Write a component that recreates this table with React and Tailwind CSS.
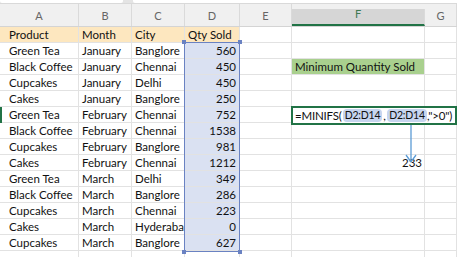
import React from 'react';

const cols = [
  { key: 'A', w: 'w-[79px]' },
  { key: 'B', w: 'w-[53px]' },
  { key: 'C', w: 'w-[53px]' },
  { key: 'D', w: 'w-[55px]' },
  { key: 'E', w: 'w-[52px]' },
  { key: 'F', w: 'w-[133px]' },
  { key: 'G', w: 'flex-1' },
];

const rows = [
  ['Green Tea', 'January', 'Banglore', 560],
  ['Black Coffee', 'January', 'Chennai', 450],
  ['Cupcakes', 'January', 'Delhi', 450],
  ['Cakes', 'January', 'Banglore', 250],
  ['Green Tea', 'February', 'Chennai', 752],
  ['Black Coffee', 'February', 'Chennai', 1538],
  ['Cupcakes', 'February', 'Banglore', 981],
  ['Cakes', 'February', 'Chennai', 1212],
  ['Green Tea', 'March', 'Delhi', 349],
  ['Black Coffee', 'March', 'Banglore', 286],
  ['Cupcakes', 'March', 'Chennai', 223],
  ['Cakes', 'March', 'Hyderabad', 0],
  ['Cupcakes', 'March', 'Banglore', 627],
];

const cell = 'h-4 shrink-0 border-r border-b border-[#e2e2e2] overflow-hidden whitespace-nowrap leading-[15px]';

function Row({ children }) {
  return <div className="flex">{children}</div>;
}

export default function App() {
  return (
    <div
      className="relative w-[457px] h-[257px] overflow-hidden bg-white text-[11.5px] text-[#111]"
      style={{ fontFamily: 'Lato, "Liberation Sans", sans-serif' }}
    >
      {/* formula bar bottom edge */}
      <div className="flex h-[3px] bg-[#e4e4e4]">
        <div className="w-[123px] bg-white rounded-b-[2px]" />
        <div className="w-[10px]" />
        <div className="flex-1 bg-white rounded-bl-[2px]" />
      </div>

      {/* column headers */}
      <div className="flex h-[24px] bg-[#f0f0f0] border-t border-[#d9d9d9] border-b border-b-[#d4d4d4] text-[11px] text-[#666]">
        {cols.map((c) => (
          <div
            key={c.key}
            className={`${c.w} shrink-0 flex items-end justify-center pb-[2px] border-r border-[#dadada] ${
              c.key === 'F' ? 'bg-[#d6d6d6] border-b-2 border-b-[#217346] mt-[5px] text-[#3f7a52]' : ''
            }`}
          >
            {c.key}
          </div>
        ))}
      </div>

      {/* row 1 */}
      <Row>
        <div className={`${cell} w-[79px] bg-[#fde7bf] pl-[9px]`}>Product</div>
        <div className={`${cell} w-[53px] bg-[#fde7bf] pl-[3px]`}>Month</div>
        <div className={`${cell} w-[53px] bg-[#fde7bf] pl-[3px]`}>City</div>
        <div className={`${cell} w-[55px] bg-[#fde7bf] pl-[3px]`}>Qty Sold</div>
        <div className={`${cell} w-[52px]`} />
        <div className={`${cell} w-[133px]`} />
        <div className={`${cell} flex-1`} />
      </Row>

      {rows.map((r, i) => (
        <Row key={i}>
          <div className={`${cell} w-[79px] pl-[9px]`}>{r[0]}</div>
          <div className={`${cell} w-[53px] pl-[3px]`}>{r[1]}</div>
          <div className={`${cell} w-[53px] pl-[3px]`}>{r[2]}</div>
          <div className={`${cell} w-[55px] bg-[#dae1f2] pr-[3px] text-right`}>{r[3]}</div>
          <div className={`${cell} w-[52px]`} />
          {i === 1 ? (
            <div className={`${cell} w-[133px] bg-[#a9d08e] pl-[3px]`}>Minimum Quantity Sold</div>
          ) : i === 7 ? (
            <div className={`${cell} w-[133px] pr-[2px] text-right`}>233</div>
          ) : (
            <div className={`${cell} w-[133px]`} />
          )}
          <div className={`${cell} flex-1`} />
        </Row>
      ))}

      <Row>
        {cols.map((c) => (
          <div key={c.key} className={`${cell} ${c.w}`} />
        ))}
      </Row>

      {/* active row marker */}
      <div className="absolute left-0 top-[107px] w-[2px] h-[16px] bg-[#217346]" />

      {/* selection D2:D14 */}
      <div className="absolute left-[184px] top-[42px] w-[56px] h-[210px] border-[1.5px] border-[#6a82c2]">
        <span className="absolute -left-[3px] -top-[3px] w-[4px] h-[4px] bg-[#6a82c2]" />
        <span className="absolute -right-[3px] -top-[3px] w-[4px] h-[4px] bg-[#6a82c2]" />
        <span className="absolute -left-[3px] -bottom-[3px] w-[4px] h-[4px] bg-[#6a82c2]" />
        <span className="absolute -right-[3px] -bottom-[3px] w-[4px] h-[4px] bg-[#6a82c2]" />
      </div>

      {/* formula in edit mode */}
      <div className="absolute left-[291px] top-[106px] w-[166px] h-[19px] bg-white border-2 border-[#217346] flex items-center pl-[2px] whitespace-nowrap leading-[13px] tracking-[-0.2px]">
        <span className="w-[48px] shrink-0">=MINIFS(</span>
        <span className="w-[39px] shrink-0 text-center text-[10.5px] rounded-[4px] bg-[#c7d5ef]">D2:D14</span>
        <span className="w-[5px] shrink-0 text-center">,</span>
        <span className="w-[40px] shrink-0 text-center text-[10.5px] rounded-[4px] bg-[#c7d5ef]">D2:D14</span>
        <span>,"&gt;0")</span>
      </div>

      {/* arrow */}
      <svg className="absolute left-[404px] top-[125px]" width="14" height="40" viewBox="0 0 14 40">
        <line x1="7" y1="0" x2="7" y2="37" stroke="#5b9bd5" strokeWidth="1.3" />
        <polyline points="2,30 7,37 12,30" fill="none" stroke="#5b9bd5" strokeWidth="1.3" />
      </svg>
    </div>
  );
}
